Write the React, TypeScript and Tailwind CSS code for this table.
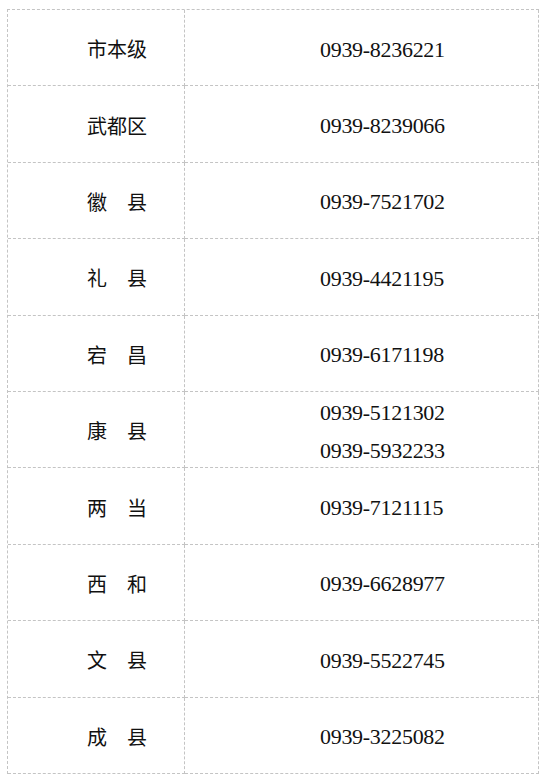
const ROWS: { name: string; phones: string[] }[] = [
  { name: "市本级", phones: ["0939-8236221"] },
  { name: "武都区", phones: ["0939-8239066"] },
  { name: "徽　县", phones: ["0939-7521702"] },
  { name: "礼　县", phones: ["0939-4421195"] },
  { name: "宕　昌", phones: ["0939-6171198"] },
  { name: "康　县", phones: ["0939-5121302", "0939-5932233"] },
  { name: "两　当", phones: ["0939-7121115"] },
  { name: "西　和", phones: ["0939-6628977"] },
  { name: "文　县", phones: ["0939-5522745"] },
  { name: "成　县", phones: ["0939-3225082"] },
];

export default function App() {
  return (
    <div
      className="w-[552px] h-[781px] bg-white pt-[9px] pl-[7px] text-[#111]"
      style={{ fontFamily: '"Liberation Serif", "Noto Sans CJK SC", serif' }}
    >
      <div className="w-[532px] border-t border-l border-dashed border-[#c4c4c4]">
        {ROWS.map((r) => (
          <div key={r.name} className="flex h-[76.4px]">
            <div className="w-[177px] shrink-0 border-r border-b border-dashed border-[#c4c4c4] flex items-center pl-[79px] pt-[5px] text-[20px] leading-none">
              {r.name}
            </div>
            <div className="flex-1 border-r border-b border-dashed border-[#c4c4c4] flex flex-col justify-center gap-[16px] pl-[135px] pt-[4px] text-[22px] leading-none tracking-[-0.3px]">
              {r.phones.map((p) => (
                <div key={p}>{p}</div>
              ))}
            </div>
          </div>
        ))}
      </div>
    </div>
  );
}
